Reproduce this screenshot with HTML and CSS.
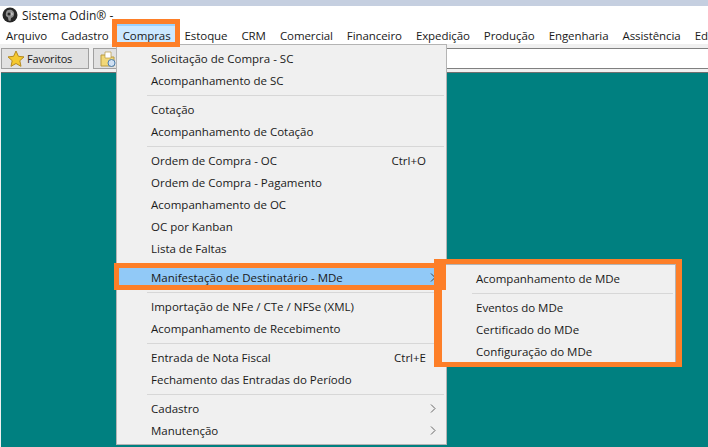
FILE: index.html
```html
<!DOCTYPE html>
<html lang="pt-BR">
<head>
<meta charset="utf-8">
<title>Sistema Odin</title>
<link rel="stylesheet" href="styles.css">
</head>
<body>
<div class="app">
  <header class="titlebar">
    <svg class="logo" width="16" height="16" viewBox="0 0 16 16"><circle cx="8" cy="8" r="7.5" fill="#262626"/><path d="M5 3.5c2-1 4.500-1 6 .5s1.500 4 0 6l-2 1-.5 3-2-.5-.5-3-2-1.500c-.5-2 0-4 1-5.500z" fill="#8f8f8f"/><circle cx="7" cy="7" r="1.500" fill="#2a2a2a"/><path d="M9 5l2 2-1.500 2z" fill="#d0d0d0"/></svg>
    <span>Sistema Odin® -</span>
  </header>
  <nav class="menubar">
    <span class="mi">Arquivo</span>
    <span class="mi">Cadastro</span>
    <span class="mi active">Compras</span>
    <span class="mi">Estoque</span>
    <span class="mi">CRM</span>
    <span class="mi">Comercial</span>
    <span class="mi">Financeiro</span>
    <span class="mi">Expedição</span>
    <span class="mi">Produção</span>
    <span class="mi">Engenharia</span>
    <span class="mi">Assistência</span>
    <span class="mi">Ed</span>
  </nav>
  <div class="toolbar">
    <div class="tool">
      <svg width="18" height="18" viewBox="0 0 18 18"><path d="M9 1l2.400 5.300 5.600.6-4.200 3.800 1.200 5.600L9 13.500l-5 2.800 1.200-5.600L1 6.900l5.600-.6z" fill="#f5c930" stroke="#b58a20" stroke-width="1"/></svg>
      <span>Favoritos</span>
    </div>
    <div class="tool small">
      <svg width="18" height="18" viewBox="0 0 18 18"><path d="M2 5h5l1 2h7v9H2z" fill="#f2d878" stroke="#b89a40"/><path d="M6 2h6v6H6z" fill="#fff" stroke="#b89a40" stroke-width=".7"/><circle cx="12.500" cy="13" r="3.500" fill="#cfe0f2" stroke="#4a7cae"/></svg>
    </div>
    <div class="tabs"></div>
  </div>
  <main class="desktop"></main>
</div>

<div class="menu">
  <div class="row"><span>Solicitação de Compra - SC</span></div>
  <div class="row"><span>Acompanhamento de SC</span></div>
  <div class="sep"></div>
  <div class="row"><span>Cotação</span></div>
  <div class="row"><span>Acompanhamento de Cotação</span></div>
  <div class="sep"></div>
  <div class="row"><span>Ordem de Compra - OC</span><kbd class="key">Ctrl+O</kbd></div>
  <div class="row"><span>Ordem de Compra - Pagamento</span></div>
  <div class="row"><span>Acompanhamento de OC</span></div>
  <div class="row"><span>OC por Kanban</span></div>
  <div class="row"><span>Lista de Faltas</span></div>
  <div class="sep"></div>
  <div class="row hover"><span>Manifestação de Destinatário - MDe</span><svg class="chev" width="6" height="9" viewBox="0 0 6 9"><path d="M1 .5l4 4-4 4" fill="none" stroke="#444"/></svg></div>
  <div class="sep"></div>
  <div class="row"><span>Importação de NFe / CTe / NFSe (XML)</span></div>
  <div class="row"><span>Acompanhamento de Recebimento</span></div>
  <div class="sep"></div>
  <div class="row"><span>Entrada de Nota Fiscal</span><kbd class="key">Ctrl+E</kbd></div>
  <div class="row"><span>Fechamento das Entradas do Período</span></div>
  <div class="sep"></div>
  <div class="row"><span>Cadastro</span><svg class="chev" width="6" height="9" viewBox="0 0 6 9"><path d="M1 .5l4 4-4 4" fill="none" stroke="#666"/></svg></div>
  <div class="row"><span>Manutenção</span><svg class="chev" width="6" height="9" viewBox="0 0 6 9"><path d="M1 .5l4 4-4 4" fill="none" stroke="#666"/></svg></div>
</div>

<div class="menu submenu">
  <div class="row"><span>Acompanhamento de MDe</span></div>
  <div class="sep"></div>
  <div class="row"><span>Eventos do MDe</span></div>
  <div class="row"><span>Certificado do MDe</span></div>
  <div class="row"><span>Configuração do MDe</span></div>
</div>

<div class="mark mark-compras"></div>
<div class="mark mark-item"></div>
<div class="mark mark-sub"></div>
</body>
</html>
```
FILE: styles.css
```css
* { box-sizing: border-box; }
html, body { margin: 0; height: 100%; overflow: hidden; }
body { font: 12px "Open Sans", "Noto Sans", sans-serif; color: #1a1a1a; background: #f0f0f0; }
.app { display: flex; flex-direction: column; height: 447px; overflow: hidden; border-top: 6px solid #c5cfe0; }
.titlebar { height: 18px; background: #fff; display: flex; align-items: center; gap: 4px; padding-left: 2px; flex: none; }
.menubar { height: 20px; background: #fff; display: flex; flex: none; overflow: hidden; font-size: 11.5px; letter-spacing: -0.08px; padding-left: 0; }
.mi { padding: 2px 7px 0; line-height: 20px; white-space: nowrap; }
.mi:first-child { padding-left: 6px; }
.mi.active { background: #cce8ff; box-shadow: inset 0 2px 0 #99d1ff; }
.toolbar { height: 28px; background: #f0f0f0; display: flex; flex: none; gap: 4px; padding: 4px 0 0 1px; font-size: 11px; letter-spacing: -0.2px; }
.tool { width: 88px; height: 21px; border: 1px solid #a0a0a0; background: #e1e1e1; display: flex; align-items: center; gap: 2px; padding-left: 5px; }
.tool.small { width: 30px; }
.tabs { flex: 1; height: 21px; background: #fff; border-top: 1px solid #808080; border-bottom: 1px solid #808080; }
.desktop { flex: 1; background: #008080; margin-left: 1px; border-top: 1px solid #707070; }
.menu { position: absolute; left: 116px; top: 44px; width: 331px; height: 401px; background: #f0f0f0; border: 1px solid #b4b4b4; padding: 3px 2px; overflow: hidden; font-size: 11.5px; }
.row { height: 22px; display: flex; align-items: center; justify-content: space-between; padding: 0 8px 2px 32px; white-space: nowrap; }
.row.hover { background: #91c9f7; }
.sep { height: 1px; background: #d7d7d7; margin: 3px 0 3px 28px; }
.key { font: inherit; margin-right: 10px; }
.submenu { left: 441px; top: 264px; width: 235px; height: 101px; }
.submenu .row { padding-left: 32px; }
.mark { position: absolute; border: 5px solid #fd7f28; }
.mark-compras { left: 112px; top: 19px; width: 68px; height: 28px; }
.mark-item { left: 114px; top: 263px; width: 332px; height: 27px; }
.mark-sub { left: 434px; top: 259px; width: 248px; height: 108px; border-left-width: 8px; border-right-width: 6px; }
```
